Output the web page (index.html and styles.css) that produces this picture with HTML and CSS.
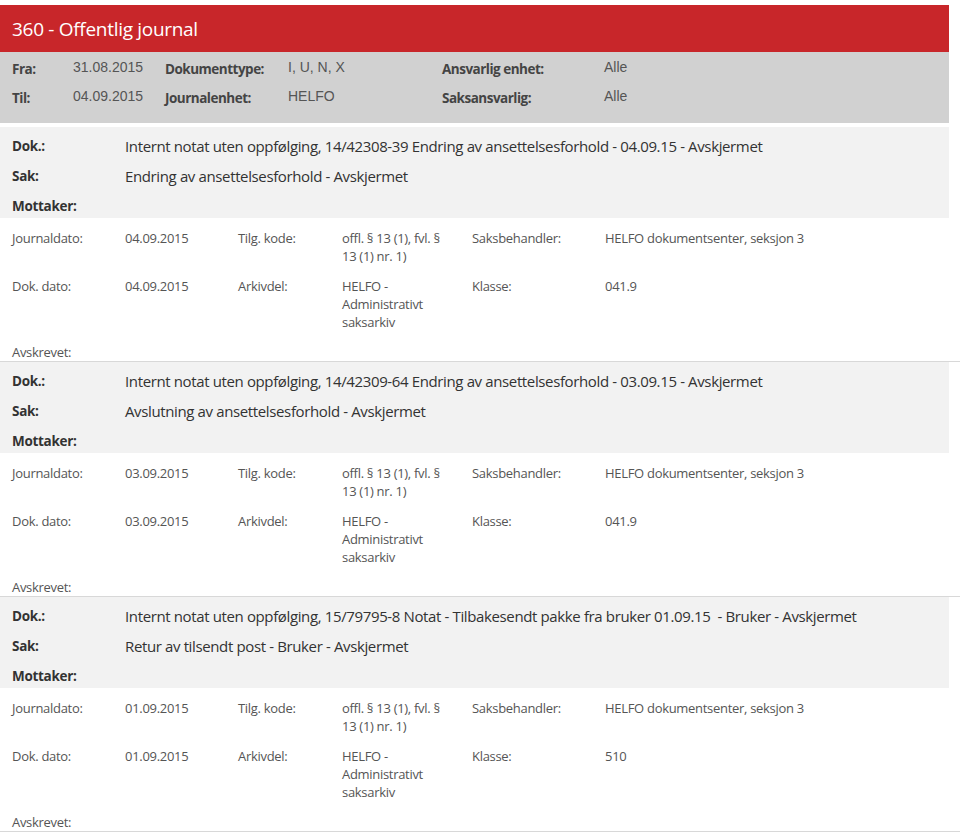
FILE: index.html
```html
<!DOCTYPE html>
<html lang="no">
<head>
<meta charset="utf-8">
<title>360 - Offentlig journal</title>
<link rel="stylesheet" href="styles.css">
</head>
<body>
<div class="page">
  <header class="title-bar"><h1>360 - Offentlig journal</h1></header>
  <section class="filters">
    <div class="frow">
      <span class="flabel c1">Fra:</span><span class="fval c2">31.08.2015</span>
      <span class="flabel c3">Dokumenttype:</span><span class="fval c4">I, U, N, X</span>
      <span class="flabel c5">Ansvarlig enhet:</span><span class="fval">Alle</span>
    </div>
    <div class="frow">
      <span class="flabel c1">Til:</span><span class="fval c2">04.09.2015</span>
      <span class="flabel c3">Journalenhet:</span><span class="fval c4">HELFO</span>
      <span class="flabel c5">Saksansvarlig:</span><span class="fval">Alle</span>
    </div>
  </section>

  <article class="record">
    <div class="rhead">
      <div class="hrow"><span class="hlabel">Dok.:</span><span class="hval">Internt notat uten oppfølging, 14/42308-39 Endring av ansettelsesforhold - 04.09.15 - Avskjermet</span></div>
      <div class="hrow"><span class="hlabel">Sak:</span><span class="hval">Endring av ansettelsesforhold - Avskjermet</span></div>
      <div class="hrow"><span class="hlabel">Mottaker:</span><span class="hval"></span></div>
    </div>
    <div class="details">
      <div class="drow">
        <span class="d1">Journaldato:</span><span class="d2">04.09.2015</span>
        <span class="d3">Tilg. kode:</span><span class="d4">offl. § 13 (1), fvl. § 13 (1) nr. 1)</span>
        <span class="d5">Saksbehandler:</span><span class="d6">HELFO dokumentsenter, seksjon 3</span>
      </div>
      <div class="drow">
        <span class="d1">Dok. dato:</span><span class="d2">04.09.2015</span>
        <span class="d3">Arkivdel:</span><span class="d4">HELFO - Administrativt saksarkiv</span>
        <span class="d5">Klasse:</span><span class="d6">041.9</span>
      </div>
      <div class="drow"><span class="d1">Avskrevet:</span></div>
    </div>
  </article>

  <article class="record">
    <div class="rhead">
      <div class="hrow"><span class="hlabel">Dok.:</span><span class="hval">Internt notat uten oppfølging, 14/42309-64 Endring av ansettelsesforhold - 03.09.15 - Avskjermet</span></div>
      <div class="hrow"><span class="hlabel">Sak:</span><span class="hval">Avslutning av ansettelsesforhold - Avskjermet</span></div>
      <div class="hrow"><span class="hlabel">Mottaker:</span><span class="hval"></span></div>
    </div>
    <div class="details">
      <div class="drow">
        <span class="d1">Journaldato:</span><span class="d2">03.09.2015</span>
        <span class="d3">Tilg. kode:</span><span class="d4">offl. § 13 (1), fvl. § 13 (1) nr. 1)</span>
        <span class="d5">Saksbehandler:</span><span class="d6">HELFO dokumentsenter, seksjon 3</span>
      </div>
      <div class="drow">
        <span class="d1">Dok. dato:</span><span class="d2">03.09.2015</span>
        <span class="d3">Arkivdel:</span><span class="d4">HELFO - Administrativt saksarkiv</span>
        <span class="d5">Klasse:</span><span class="d6">041.9</span>
      </div>
      <div class="drow"><span class="d1">Avskrevet:</span></div>
    </div>
  </article>

  <article class="record">
    <div class="rhead">
      <div class="hrow"><span class="hlabel">Dok.:</span><span class="hval">Internt notat uten oppfølging, 15/79795-8 Notat - Tilbakesendt pakke fra bruker 01.09.15&nbsp; - Bruker - Avskjermet</span></div>
      <div class="hrow"><span class="hlabel">Sak:</span><span class="hval">Retur av tilsendt post - Bruker - Avskjermet</span></div>
      <div class="hrow"><span class="hlabel">Mottaker:</span><span class="hval"></span></div>
    </div>
    <div class="details">
      <div class="drow">
        <span class="d1">Journaldato:</span><span class="d2">01.09.2015</span>
        <span class="d3">Tilg. kode:</span><span class="d4">offl. § 13 (1), fvl. § 13 (1) nr. 1)</span>
        <span class="d5">Saksbehandler:</span><span class="d6">HELFO dokumentsenter, seksjon 3</span>
      </div>
      <div class="drow">
        <span class="d1">Dok. dato:</span><span class="d2">01.09.2015</span>
        <span class="d3">Arkivdel:</span><span class="d4">HELFO - Administrativt saksarkiv</span>
        <span class="d5">Klasse:</span><span class="d6">510</span>
      </div>
      <div class="drow"><span class="d1">Avskrevet:</span></div>
    </div>
  </article>
</div>
</body>
</html>
```

FILE: styles.css
```css
* { box-sizing: border-box; }
html, body { margin: 0; padding: 0; background: #ffffff; }
body {
  font-family: "Open Sans", "Noto Sans", "DejaVu Sans", sans-serif;
  color: #333;
}
.page { padding-top: 5px; width: 960px; }

.title-bar {
  width: 949px;
  height: 47px;
  background: #c8262a;
  display: flex;
  align-items: center;
  padding-left: 12px;
}
.title-bar h1 {
  margin: 0;
  font-weight: 400;
  font-size: 19px;
  color: #fff;
  letter-spacing: -0.3px;
}

.filters {
  width: 949px;
  height: 71px;
  background: #d1d1d1;
  padding-top: 2px;
}
.frow {
  display: flex;
  height: 29px;
  align-items: center;
  padding-left: 12px;
}
.flabel {
  font-weight: 700;
  font-size: 13.5px;
  color: #444;
  letter-spacing: -0.5px;
}
.fval {
  font-family: "Liberation Sans", Arial, sans-serif;
  font-size: 14px;
  color: #555;
  margin-top: -3px;
}
.c1 { width: 61px; }
.c2 { width: 92px; }
.c3 { width: 123px; }
.c4 { width: 154px; }
.c5 { width: 162px; }

.record {
  margin-top: 4px;
  width: 960px;
  border-bottom: 1px solid #d8d8d8;
}
.record + .record { margin-top: 0; }

.rhead {
  width: 949px;
  height: 91px;
  background: #f2f2f2;
  padding-top: 4px;
  padding-left: 12px;
}
.hrow {
  display: flex;
  height: 30px;
  align-items: center;
}
.hlabel {
  width: 113px;
  font-weight: 700;
  font-size: 13.5px;
  color: #333;
  letter-spacing: -0.3px;
}
.hval {
  font-size: 15px;
  color: #333;
  white-space: nowrap;
  letter-spacing: -0.37px;
}

.details {
  padding: 11px 0 0 12px;
  font-size: 13px;
  line-height: 18px;
  color: #555;
  letter-spacing: -0.3px;
}
.drow {
  display: flex;
  align-items: flex-start;
  margin-bottom: 12px;
}
.drow:last-child { margin-bottom: 0; }
.d1 { width: 113px; }
.d2 { width: 113px; }
.d3 { width: 104px; }
.d4 { width: 130px; padding-right: 22px; }
.d5 { width: 133px; }
.d6 { flex: 1; }
```
